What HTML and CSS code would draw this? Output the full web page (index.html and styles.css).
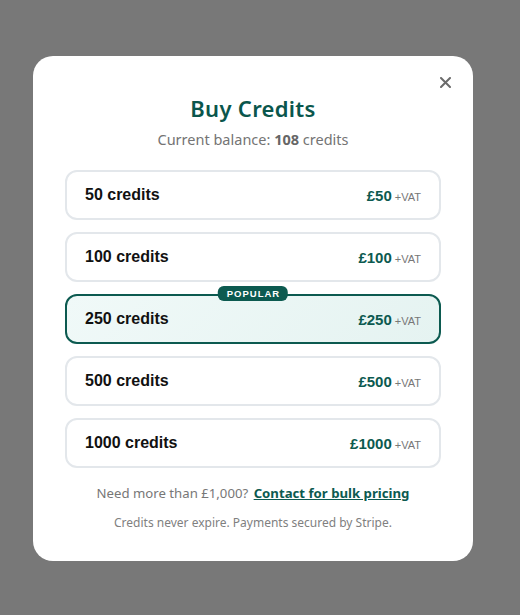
FILE: index.html
```html
<!DOCTYPE html>
<html>
<head>
<meta charset="utf-8">
<link rel="stylesheet" href="styles.css">
</head>
<body>
<div class="overlay">
  <div class="modal">
    <button class="close" aria-label="Close">
      <svg width="11" height="11" viewBox="0 0 11 11"><path d="M1 1 L10 10 M10 1 L1 10" stroke="#6b6b6b" stroke-width="2" stroke-linecap="round"/></svg>
    </button>
    <h1 class="title">Buy Credits</h1>
    <p class="balance">Current balance: <strong>108</strong> credits</p>
    <div class="options">
      <div class="option"><span class="label">50 credits</span><span class="price"><b>£50</b><small>+VAT</small></span></div>
      <div class="option"><span class="label">100 credits</span><span class="price"><b>£100</b><small>+VAT</small></span></div>
      <div class="option popular"><span class="badge">POPULAR</span><span class="label">250 credits</span><span class="price"><b>£250</b><small>+VAT</small></span></div>
      <div class="option"><span class="label">500 credits</span><span class="price"><b>£500</b><small>+VAT</small></span></div>
      <div class="option"><span class="label">1000 credits</span><span class="price"><b>£1000</b><small>+VAT</small></span></div>
    </div>
    <p class="bulk">Need more than £1,000? <a href="#">Contact for bulk pricing</a></p>
    <p class="note">Credits never expire. Payments secured by Stripe.</p>
  </div>
</div>
</body>
</html>
```
FILE: styles.css
```css
* { box-sizing: border-box; }
html, body { margin: 0; padding: 0; }
body {
  width: 520px;
  height: 615px;
  background: #787878;
  font-family: "Noto Sans", sans-serif;
}
.overlay {
  display: flex;
  justify-content: flex-start;
  padding: 56px 0 0 33px;
}
.modal {
  position: relative;
  width: 440px;
  background: #fff;
  border-radius: 20px;
  padding: 36px 32px 29px;
  text-align: center;
}
.close {
  position: absolute;
  top: 21px;
  right: 22px;
  border: 0;
  background: none;
  padding: 0;
  width: 11px;
  height: 11px;
  display: flex;
}
.title {
  margin: 0;
  font-size: 22px;
  line-height: 32px;
  font-weight: 600;
  color: #0a564c;
  letter-spacing: 0.3px;
}
.balance {
  margin: 4px 0 0;
  font-size: 14.5px;
  line-height: 22px;
  color: #747474;
}
.balance strong { font-weight: 700; color: #666; }
.options {
  margin-top: 20px;
  display: flex;
  flex-direction: column;
  gap: 12px;
}
.option {
  position: relative;
  height: 50px;
  border: 2px solid #e3e7eb;
  border-radius: 12px;
  padding: 0 18px;
  display: flex;
  align-items: center;
  justify-content: space-between;
  font-family: "Liberation Sans", Arial, sans-serif;
  background: #fff;
}
.option.popular {
  border-color: #0c5a50;
  background: linear-gradient(135deg, #f0f9f8 0%, #e5f3f1 100%);
}
.label {
  font-size: 16px;
  font-weight: 700;
  color: #111;
}
.price { display: flex; align-items: baseline; gap: 3px; }
.price b {
  font-size: 15px;
  font-weight: 700;
  color: #0c5a50;
}
.price small {
  font-size: 11px;
  color: #777;
}
.badge {
  position: absolute;
  top: -10px;
  left: 50%;
  transform: translateX(-50%);
  background: #0c5a50;
  color: #fff;
  font-size: 9.5px;
  font-weight: 700;
  letter-spacing: 1px;
  line-height: 15px;
  height: 15px;
  padding: 0 8px 0 9px;
  border-radius: 6px;
}
.bulk {
  margin: 15px 0 0;
  font-size: 13.2px;
  line-height: 20px;
  color: #777;
}
.bulk a {
  color: #0c5a50;
  font-weight: 700;
  text-decoration: underline;
  margin-left: 2px;
}
.note {
  margin: 11px 0 0;
  font-size: 12px;
  line-height: 18px;
  color: #808080;
}
```
